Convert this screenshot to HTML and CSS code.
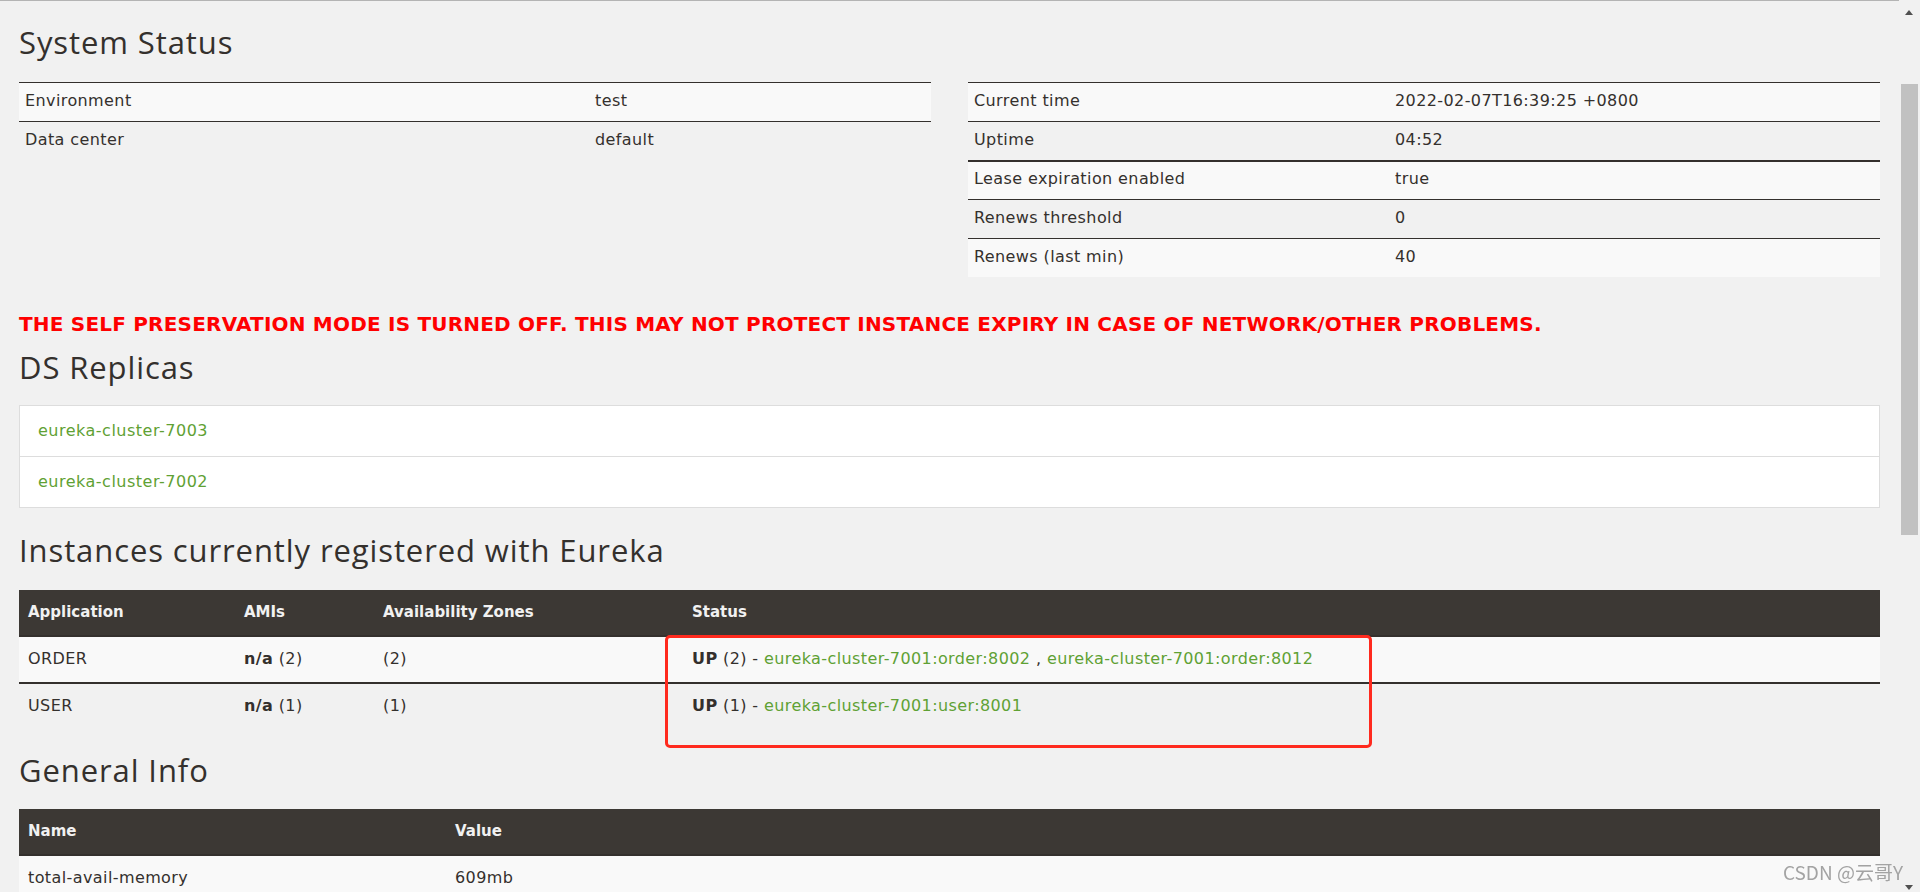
FILE: index.html
```html
<!DOCTYPE html>
<html lang="en">
<head>
<meta charset="utf-8">
<title>Eureka</title>
<link rel="stylesheet" href="styles.css">
</head>
<body>
<div class="page">
  <h2 class="section-title first">System Status</h2>
  <div class="status-grid">
    <table class="kv kv-left">
      <tr class="odd"><td class="k">Environment</td><td>test</td></tr>
      <tr><td class="k">Data center</td><td>default</td></tr>
    </table>
    <table class="kv kv-right">
      <tr class="odd"><td class="k">Current time</td><td>2022-02-07T16:39:25 +0800</td></tr>
      <tr><td class="k">Uptime</td><td>04:52</td></tr>
      <tr class="odd thick"><td class="k">Lease expiration enabled</td><td>true</td></tr>
      <tr><td class="k">Renews threshold</td><td>0</td></tr>
      <tr class="odd"><td class="k">Renews (last min)</td><td>40</td></tr>
    </table>
  </div>

  <h4 class="warning">THE SELF PRESERVATION MODE IS TURNED OFF. THIS MAY NOT PROTECT INSTANCE EXPIRY IN CASE OF NETWORK/OTHER PROBLEMS.</h4>

  <h2 class="section-title replicas-title">DS Replicas</h2>
  <ul class="replicas">
    <li><a href="#">eureka-cluster-7003</a></li>
    <li><a href="#">eureka-cluster-7002</a></li>
  </ul>

  <h2 class="section-title instances-title">Instances currently registered with Eureka</h2>
  <div class="instances-wrap">
    <table class="data instances">
      <thead>
        <tr><th class="c-app">Application</th><th class="c-ami">AMIs</th><th class="c-zone">Availability Zones</th><th>Status</th></tr>
      </thead>
      <tbody>
        <tr class="odd"><td>ORDER</td><td><b>n/a</b> (2)</td><td>(2)</td><td><b>UP</b> (2) - <a href="#">eureka-cluster-7001:order:8002</a> , <a href="#">eureka-cluster-7001:order:8012</a></td></tr>
        <tr class="sep"><td>USER</td><td><b>n/a</b> (1)</td><td>(1)</td><td><b>UP</b> (1) - <a href="#">eureka-cluster-7001:user:8001</a></td></tr>
      </tbody>
    </table>
    <div class="annotation"></div>
  </div>

  <h2 class="section-title general-title">General Info</h2>
  <table class="data general">
    <thead>
      <tr><th class="c-name">Name</th><th>Value</th></tr>
    </thead>
    <tbody>
      <tr class="odd"><td>total-avail-memory</td><td>609mb</td></tr>
    </tbody>
  </table>
</div>

<div class="scrollbar">
  <span class="arrow-up"></span>
  <span class="thumb"></span>
  <span class="arrow-down"></span>
</div>
<div class="watermark">CSDN @云哥Y</div>
</body>
</html>
```

FILE: styles.css
```css
html, body {
  margin: 0;
  padding: 0;
  background: #f1f1f1;
  overflow: hidden;
  height: 100%;
}

body {
  font-family: "DejaVu Sans", "Liberation Sans", sans-serif;
  font-size: 16px;
  color: #34302d;
}

.page {
  box-sizing: border-box;
  width: calc(100% - 19px);
  padding: 0 21px 0 19px;
  border-top: 1px solid #b4b4b4;
}

.section-title {
  font-family: "Open Sans", "Liberation Sans", sans-serif;
  font-weight: 400;
  font-size: 31px;
  letter-spacing: 0.9px;
  line-height: 40px;
  color: #34302d;
  margin: 0;
  white-space: nowrap;
}

.section-title.first { margin: 21px 0 20px; }
.replicas-title { margin: 12px 0 18px; }
.instances-title { margin: 22px 0 20px; }
.general-title { margin: 21px 0 19px; }

.status-grid {
  display: grid;
  grid-template-columns: 1fr 1fr;
  column-gap: 37px;
  align-items: start;
}

table {
  border-collapse: separate;
  border-spacing: 0;
  width: 100%;
}

.kv td {
  border-top: 1px solid #34302d;
  padding: 8px 6px 10px;
  line-height: 20px;
  letter-spacing: 0.4px;
  white-space: nowrap;
}

.kv tr.odd td { background: #f9f9f9; }
.kv tr.thick td { border-top-width: 2px; padding-top: 7px; }

.kv-left td.k { width: 558px; }
.kv-right td.k { width: 409px; }

.warning {
  margin: 36px 0 0;
  font-size: 20px;
  line-height: 22px;
  font-weight: bold;
  letter-spacing: 0.2px;
  color: #ff0000;
  white-space: nowrap;
}

.replicas {
  list-style: none;
  margin: 0;
  padding: 0;
  background: #ffffff;
  border: 1px solid #dddddd;
}

.replicas li {
  height: 50px;
  line-height: 50px;
  padding: 0 18px;
  letter-spacing: 0.5px;
}

.replicas li + li { border-top: 1px solid #dddddd; }

a {
  color: #5fa134;
  text-decoration: none;
}

.data th {
  background: #3c3834;
  color: #f1f1f1;
  font-size: 15px;
  font-weight: bold;
  text-align: left;
  line-height: 20px;
  padding: 12px 9px 13px;
  border-bottom: 2px solid #34302d;
  white-space: nowrap;
}

.data td {
  padding: 12px 9px 13px;
  line-height: 20px;
  letter-spacing: 0.4px;
  white-space: nowrap;
}

.data tr.odd td { background: #f9f9f9; }
.data tr.sep td { border-top: 2px solid #34302d; }

.data b { font-weight: bold; }

.instances .c-app { width: 198px; }
.instances .c-ami { width: 121px; }
.instances .c-zone { width: 291px; }
.general .c-name { width: 409px; }

.instances-wrap {
  position: relative;
}

.annotation {
  position: absolute;
  left: 646px;
  top: 45px;
  width: 701px;
  height: 107px;
  border: 3px solid #ff2a1e;
  border-radius: 5px;
}

.scrollbar {
  position: fixed;
  top: 0;
  right: 0;
  width: 21px;
  height: 100%;
  background: #f1f1f1;
}

.thumb {
  position: absolute;
  left: 2px;
  top: 84px;
  width: 17px;
  height: 451px;
  background: #c1c1c1;
}

.arrow-up, .arrow-down {
  position: absolute;
  left: 6px;
  width: 0;
  height: 0;
  border-left: 4.5px solid transparent;
  border-right: 4.5px solid transparent;
}

.arrow-up {
  top: 10px;
  border-bottom: 5px solid #505050;
}

.arrow-down {
  bottom: 2px;
  border-top: 5px solid #505050;
}

.watermark {
  position: fixed;
  right: 17px;
  bottom: 8px;
  font-family: "Noto Sans CJK SC", "DejaVu Sans", sans-serif;
  font-size: 19px;
  line-height: 24px;
  color: #a3a3a3;
  white-space: nowrap;
}
```
